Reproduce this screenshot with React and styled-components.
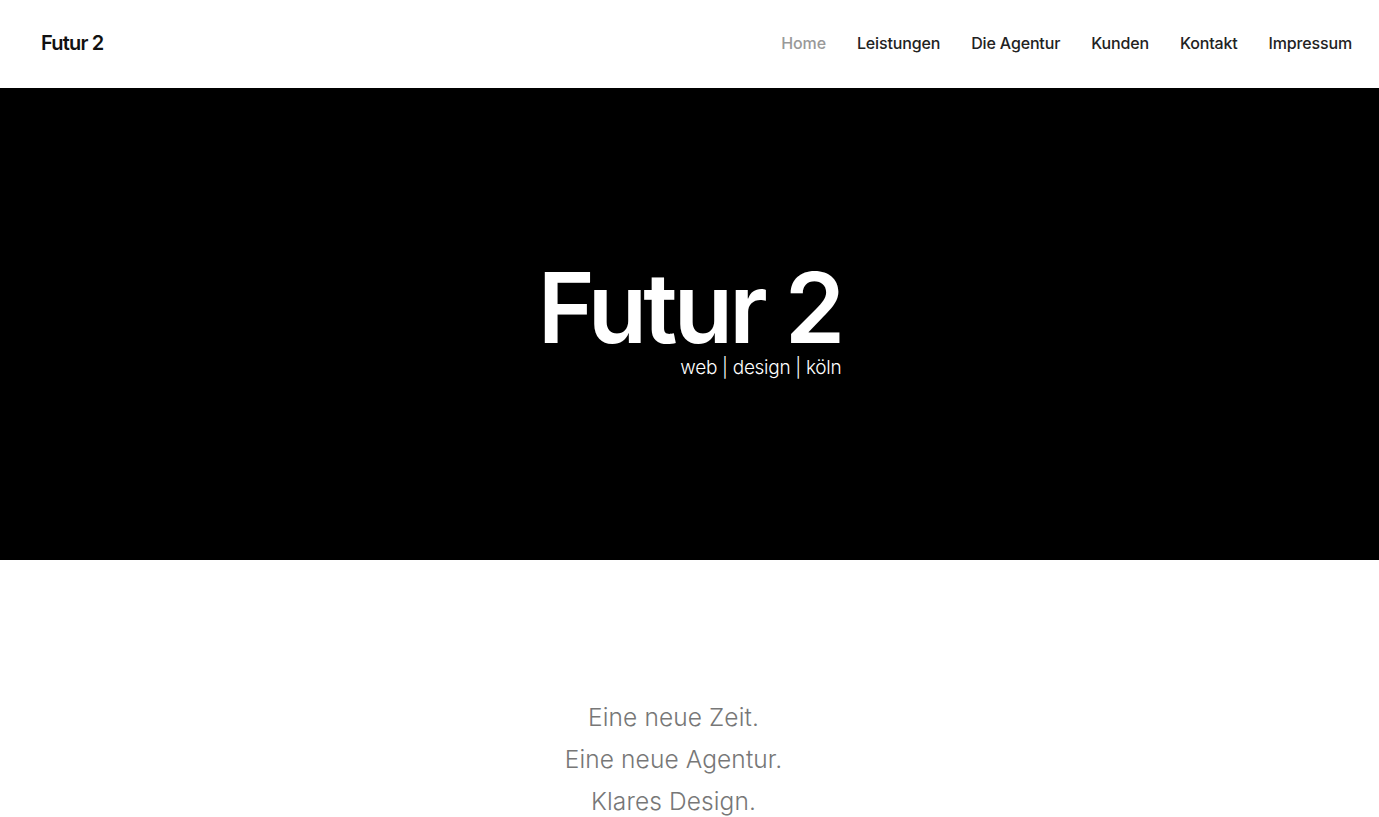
import React from 'react'
import styled, { createGlobalStyle } from 'styled-components'

const GlobalStyle = createGlobalStyle`
    body {
        margin: 0;
        font-family: Inter, "Noto Sans", sans-serif;
        background: #fff;
    }
`

const Header = styled.header`
    height: 88px;
    display: flex;
    align-items: center;
    justify-content: space-between;
    padding: 0 27px 0 41px;
`

const Logo = styled.a`
    font-size: 20px;
    font-weight: 600;
    letter-spacing: -0.8px;
    color: #111;
    text-decoration: none;
    margin-top: -3px;
`

const Nav = styled.nav`
    display: flex;
    gap: 31px;
    margin-top: -2px;
`

const NavLink = styled.a`
    font-size: 16px;
    font-weight: 500;
    letter-spacing: -0.15px;
    color: ${p => (p.active ? '#999' : '#222')};
    text-decoration: none;
`

const Hero = styled.section`
    height: 472px;
    background: #000;
    display: flex;
    align-items: center;
    justify-content: center;
`

const HeroInner = styled.div`
    display: flex;
    flex-direction: column;
    align-items: flex-end;
    margin-top: -4px;
`

const HeroTitle = styled.h1`
    margin: 0;
    color: #fff;
    font-size: 97px;
    font-weight: 600;
    letter-spacing: -3.8px;
    line-height: 0.9;
`

const HeroSub = styled.p`
    margin: 6px 0 0;
    color: #fff;
    font-size: 19px;
    font-weight: 300;
    letter-spacing: -0.3px;
    line-height: 1.2;
`

const Intro = styled.section`
    padding: 136px 32px 0 0;
    text-align: center;
`

const IntroLine = styled.p`
    margin: 0;
    color: #777;
    font-size: 24.5px;
    font-weight: 300;
    letter-spacing: 0.1px;
    line-height: 42px;
`

const links = ['Home', 'Leistungen', 'Die Agentur', 'Kunden', 'Kontakt', 'Impressum']

const App = () => {
    return (
        <>
            <GlobalStyle />
            <Header>
                <Logo href="#">Futur 2</Logo>
                <Nav>
                    {links.map((l, i) => (
                        <NavLink key={l} href="#" active={i === 0 ? 1 : 0}>{l}</NavLink>
                    ))}
                </Nav>
            </Header>
            <Hero>
                <HeroInner>
                    <HeroTitle>Futur 2</HeroTitle>
                    <HeroSub>web | design | köln</HeroSub>
                </HeroInner>
            </Hero>
            <Intro>
                <IntroLine>Eine neue Zeit.</IntroLine>
                <IntroLine>Eine neue Agentur.</IntroLine>
                <IntroLine>Klares Design.</IntroLine>
            </Intro>
        </>
    )
}

export default App
